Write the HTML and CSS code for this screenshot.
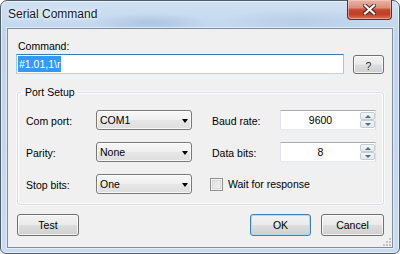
FILE: index.html
```html
<!DOCTYPE html>
<html lang="en">
<head>
    <meta charset="UTF-8">
    <title>Serial Command</title>
    <link rel="stylesheet" href="styles.css">
</head>
<body>
    <div class="window">
        <div class="titlebar">
            <span class="title">Serial Command</span>
            <div class="close">
                <svg width="13" height="11" viewBox="0 0 13 11">
                    <path d="M2 1.5 L11 9.5 M11 1.5 L2 9.5" stroke="#4a1f1a" stroke-width="4" stroke-linecap="square"/>
                    <path d="M2 1.5 L11 9.5 M11 1.5 L2 9.5" stroke="#ffffff" stroke-width="2.2" stroke-linecap="square"/>
                </svg>
            </div>
        </div>

        <div class="client">
            <div class="cmd-label">Command:</div>
            <div class="cmd-row">
                <div class="textbox focused"><span class="sel">#1.01,1\r</span></div>
                <div class="btn help">?</div>
            </div>

            <fieldset class="group">
                <legend>Port Setup</legend>
                <div class="grid">
                    <span class="lbl">Com port:</span>
                    <div class="combo">COM1<i class="arrow"></i></div>
                    <span class="lbl lbl-r">Baud rate:</span>
                    <div class="spin">
                        <span class="spin-val">9600</span>
                        <div class="spin-btns">
                            <div class="spin-btn"><i class="up"></i></div>
                            <div class="spin-btn"><i class="down"></i></div>
                        </div>
                    </div>

                    <span class="lbl">Parity:</span>
                    <div class="combo">None<i class="arrow"></i></div>
                    <span class="lbl lbl-r">Data bits:</span>
                    <div class="spin">
                        <span class="spin-val">8</span>
                        <div class="spin-btns">
                            <div class="spin-btn"><i class="up"></i></div>
                            <div class="spin-btn"><i class="down"></i></div>
                        </div>
                    </div>

                    <span class="lbl">Stop bits:</span>
                    <div class="combo">One<i class="arrow"></i></div>
                    <label class="check">
                        <span class="box"></span>
                        <span>Wait for response</span>
                    </label>
                </div>
            </fieldset>

            <div class="buttons">
                <div class="btn test">Test</div>
                <div class="btn ok">OK</div>
                <div class="btn cancel">Cancel</div>
            </div>

            <svg class="grip" width="9" height="9" viewBox="0 0 9 9">
                <rect x="7" y="1" width="2" height="2" fill="#c4c4c4"/>
                <rect x="4" y="4" width="2" height="2" fill="#c4c4c4"/>
                <rect x="7" y="4" width="2" height="2" fill="#c4c4c4"/>
                <rect x="1" y="7" width="2" height="2" fill="#c4c4c4"/>
                <rect x="4" y="7" width="2" height="2" fill="#c4c4c4"/>
                <rect x="7" y="7" width="2" height="2" fill="#c4c4c4"/>
            </svg>
        </div>
    </div>
</body>
</html>
```

FILE: styles.css
```css
body {
    margin: 0;
    padding: 0;
    background-color: #ffffff;
    font-family: 'Liberation Sans', Arial, sans-serif;
    font-size: 10.5px;
    color: #000000;
}

.window {
    position: relative;
    width: 400px;
    height: 254px;
    box-sizing: border-box;
    border: 1px solid #4f5d6e;
    border-radius: 7px 7px 6px 6px;
    background:
        radial-gradient(ellipse 60px 10px at 150px 22px, rgba(150, 180, 215, 0.55), transparent),
        radial-gradient(ellipse 80px 12px at 300px 20px, rgba(165, 192, 222, 0.45), transparent),
        linear-gradient(180deg, #cfe0f2 0%, #bfd5ec 14%, #c3d8ee 60%, #c9dcf0 100%);
    box-shadow: inset 0 0 0 1px rgba(255, 255, 255, 0.55);
}

.titlebar {
    height: 27px;
}

.title {
    display: block;
    padding: 6px 0 0 7px;
    font-size: 12px;
    line-height: 15px;
    color: #0b1a2c;
    text-shadow: 0 0 6px #ffffff, 0 0 3px #ffffff;
}

.close {
    position: absolute;
    top: -1px;
    right: 7px;
    width: 45px;
    height: 20px;
    box-sizing: border-box;
    border: 1px solid #6a2b22;
    border-top: none;
    border-radius: 0 0 4px 4px;
    background: linear-gradient(180deg, #e9b3a6 0%, #dc8e7c 40%, #c5462c 52%, #bf3f25 75%, #d77458 100%);
    box-shadow: inset 0 0 0 1px rgba(255, 220, 210, 0.45);
    display: flex;
    align-items: center;
    justify-content: center;
}

.client {
    position: relative;
    height: 220px;
    box-sizing: border-box;
    margin: 0 6px;
    border: 1px solid #7f8c9a;
    background-color: #f0f0f0;
    padding-top: 11px;
    box-shadow: 0 0 0 1px rgba(255, 255, 255, 0.5);
}

.cmd-label {
    margin-left: 10px;
    line-height: 13px;
}

.cmd-row {
    display: flex;
    margin-top: 1px;
    margin-left: 8px;
}

.textbox {
    width: 328px;
    height: 20px;
    box-sizing: border-box;
    background-color: #ffffff;
    border: 1px solid #abadb3;
    padding: 1px 0 0 1px;
}

.textbox.focused {
    border-color: #3d7bad #a4c9e3 #b7d9ed #a4c9e3;
}

.sel {
    display: inline-block;
    background-color: #3399ff;
    color: #ffffff;
    line-height: 16px;
    padding: 0 1px;
}

.btn {
    box-sizing: border-box;
    border: 1px solid #707070;
    border-radius: 3px;
    background: linear-gradient(180deg, #f2f2f2 0%, #ebebeb 48%, #dddddd 52%, #cfcfcf 100%);
    box-shadow: inset 0 0 0 1px rgba(255, 255, 255, 0.75);
    display: flex;
    align-items: center;
    justify-content: center;
    color: #000000;
}

.help {
    width: 31px;
    height: 19px;
    margin: 1px 0 0 9px;
    padding-top: 2px;
    color: #1c2a50;
}

.group {
    margin: 12px 8px 0 9px;
    padding: 11px 7px 10px 8px;
    border: 1px solid #d5dfe5;
    border-radius: 3px;
    box-shadow: inset 0 0 0 1px #ffffff, 0 0 0 1px rgba(255, 255, 255, 0.6);
    min-width: 0;
}

.group legend {
    padding: 0 2px 0 4px;
    margin-left: -5px;
    line-height: 13px;
}

.grid {
    display: grid;
    grid-template-columns: 70px 96px 88px 96px;
    grid-auto-rows: 20px;
    row-gap: 12px;
    align-items: center;
}

.lbl {
    padding-top: 2px;
}

.lbl-r {
    padding-left: 20px;
}

.combo {
    position: relative;
    height: 20px;
    box-sizing: border-box;
    border: 1px solid #7a7a7a;
    border-radius: 3px;
    background: linear-gradient(180deg, #f7f7f7 0%, #f0f0f0 50%, #e6e6e6 51%, #dedede 100%);
    box-shadow: inset 0 0 0 1px rgba(255, 255, 255, 0.7);
    padding-left: 3px;
    line-height: 19px;
}

.arrow {
    position: absolute;
    right: 3px;
    top: 8px;
    width: 0;
    height: 0;
    border-left: 3.5px solid transparent;
    border-right: 3.5px solid transparent;
    border-top: 4px solid #000000;
}

.spin {
    display: flex;
    height: 20px;
    box-sizing: border-box;
    border: 1px solid #abadb3;
    border-color: #abadb3 #dbdfe6 #e3e9ef #e2e3ea;
    background-color: #ffffff;
}

.spin-val {
    flex: 1;
    text-align: center;
    line-height: 18px;
}

.spin-btns {
    width: 15px;
    display: flex;
    flex-direction: column;
    padding: 1px 0;
}

.spin-btn {
    flex: 1;
    display: flex;
    align-items: center;
    justify-content: center;
    border: 1px solid #c3cbd4;
    border-radius: 2px;
    background: linear-gradient(180deg, #f4f6f8, #e3e8ed);
}

.spin-btn i {
    width: 0;
    height: 0;
    border-left: 3px solid transparent;
    border-right: 3px solid transparent;
}

.spin-btn .up {
    border-bottom: 3px solid #4d6a8f;
}

.spin-btn .down {
    border-top: 3px solid #4d6a8f;
}

.check {
    grid-column: 3 / span 2;
    display: flex;
    align-items: center;
    padding-left: 18px;
    gap: 5px;
}

.check .box {
    width: 13px;
    height: 13px;
    box-sizing: border-box;
    border: 1px solid #8e8f8f;
    background: linear-gradient(135deg, #dcdcdc, #f6f6f6);
    box-shadow: inset 0 0 0 1px #f4f4f4, inset 0 0 0 2px #d8d8d8;
}

.buttons {
    display: flex;
    margin: 9px 8px 0 9px;
    gap: 10px;
}

.buttons .btn {
    height: 22px;
}

.test {
    width: 62px;
    margin-right: auto;
}

.ok {
    width: 61px;
    border-color: #3c7fb1;
    box-shadow: inset 0 0 0 1px #a9def8;
}

.cancel {
    width: 63px;
}

.grip {
    position: absolute;
    right: 1px;
    bottom: 1px;
}
```
